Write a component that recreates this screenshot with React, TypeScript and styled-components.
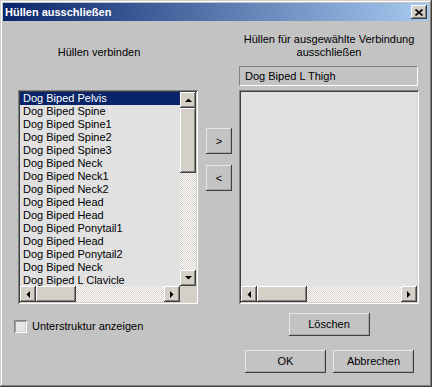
import React from 'react';
import styled, { createGlobalStyle, css } from 'styled-components';

const GlobalStyle = createGlobalStyle`
  html, body { margin: 0; padding: 0; background: #c3c3c3; }
  body { font-family: "Liberation Sans", Arial, sans-serif; font-size: 11px; color: #000; }
  * { box-sizing: border-box; }
`;

const raised = css`
  box-shadow: inset -1px -1px #404040, inset 1px 1px #ffffff, inset -2px -2px #808080, inset 2px 2px #d4d0c8;
`;

const sunken = css`
  box-shadow: inset 1px 1px #808080, inset -1px -1px #ffffff, inset 2px 2px #404040, inset -2px -2px #d4d0c8;
`;

const Window = styled.div`
  width: 432px;
  height: 387px;
  padding: 3px;
  background: #c3c3c3;
  box-shadow: inset -1px -1px #404040, inset 1px 1px #d4d0c8, inset -2px -2px #808080, inset 2px 2px #ffffff;
  display: flex;
  flex-direction: column;
`;

const TitleBar = styled.div`
  height: 18px;
  display: flex;
  align-items: center;
  justify-content: space-between;
  padding: 0 2px 0 2px;
  background: linear-gradient(to right, #0a246a, #a6caf0);
`;

const TitleText = styled.span`
  color: #fff;
  font-weight: bold;
  font-size: 11px;
  line-height: 13px;
`;

const CloseButton = styled.div`
  width: 16px;
  height: 14px;
  background: #d4d0c8;
  ${raised};
  display: flex;
  align-items: center;
  justify-content: center;
`;

const Body = styled.div`
  display: grid;
  grid-template-columns: 180px 27px 180px;
  grid-template-rows: 69px 214px auto auto;
  column-gap: 7px;
  padding-left: 15px;
`;

const LeftHeader = styled.div`
  padding-top: 25px;
  padding-right: 18px;
  text-align: center;
  line-height: 13px;
`;

const RightHeader = styled.div`
  grid-column: 3;
  padding-top: 12px;
  display: flex;
  flex-direction: column;
`;

const HeaderLabel = styled.div`
  text-align: center;
  line-height: 13px;
`;

const Field = styled.div`
  margin-top: 7px;
  height: 20px;
  width: 179px;
  border-top: 1px solid #808080;
  border-left: 1px solid #808080;
  border-bottom: 1px solid #ffffff;
  border-right: 1px solid #ffffff;
  padding-left: 5px;
  display: flex;
  align-items: center;
  line-height: 13px;
`;

const ListBox = styled.div<{ $vscroll: boolean }>`
  height: 214px;
  padding: 2px;
  background: #e1e1e1;
  ${sunken};
  display: grid;
  grid-template-columns: ${(p) => (p.$vscroll ? '1fr 16px' : '1fr')};
  grid-template-rows: 1fr 16px;
  min-width: 0;
`;

const Items = styled.div`
  overflow: hidden;
  min-width: 0;
`;

const Item = styled.div<{ $selected?: boolean }>`
  height: 13px;
  line-height: 13px;
  padding-left: 3px;
  white-space: nowrap;
  background: ${(p) => (p.$selected ? '#0a246a' : 'transparent')};
  color: ${(p) => (p.$selected ? '#ffffff' : '#000000')};
`;

const VScroll = styled.div`
  display: flex;
  flex-direction: column;
`;

const HScroll = styled.div`
  display: flex;
  flex-direction: row;
  min-width: 0;
`;

const ScrollBtn = styled.div`
  width: 16px;
  height: 16px;
  flex: none;
  background: #d4d0c8;
  ${raised};
  display: flex;
  align-items: center;
  justify-content: center;
`;

const Thumb = styled.div<{ $vertical?: boolean }>`
  flex: none;
  background: #d4d0c8;
  ${raised};
  ${(p) => (p.$vertical ? 'width: 16px;' : 'height: 16px;')}
`;

const Track = styled.div`
  flex: 1;
  background: repeating-conic-gradient(#d4d0c8 0% 25%, #ffffff 0% 50%) 0 0 / 2px 2px;
`;

const Corner = styled.div`
  background: #d4d0c8;
`;

const MiddleColumn = styled.div`
  display: flex;
  flex-direction: column;
  align-items: flex-end;
  padding-top: 38px;
  gap: 11px;
`;

const Button = styled.div<{ $w: number; $h: number }>`
  width: ${(p) => p.$w}px;
  height: ${(p) => p.$h}px;
  background: #c3c3c3;
  box-shadow: inset -1px -1px #404040, inset 1px 1px #e6e6e6, inset -2px -2px #a8a8a8;
  display: flex;
  align-items: center;
  justify-content: center;
  line-height: 13px;
`;

const CheckRow = styled.div`
  margin-top: 13px;
  margin-left: -4px;
  display: flex;
  align-items: center;
  gap: 5px;
  line-height: 13px;
  white-space: nowrap;
`;

const CheckBox = styled.div`
  width: 13px;
  height: 13px;
  background: #e6e6e6;
  box-shadow: inset 1px 1px #808080, inset -1px -1px #ffffff, inset 2px 2px #a0a0a0, inset -2px -2px #d4d0c8;
`;

const DeleteCell = styled.div`
  grid-column: 3;
  margin-top: 9px;
  display: flex;
  justify-content: center;
`;

const Footer = styled.div`
  grid-column: 1 / -1;
  margin-top: 14px;
  padding-right: 5px;
  display: flex;
  justify-content: flex-end;
  gap: 7px;
`;

type Dir = 'up' | 'down' | 'left' | 'right';

const Arrow: React.FC<{ dir: Dir }> = ({ dir }) => {
  const pts: Record<Dir, string> = {
    up: '0,4 7,4 3.5,0.5',
    down: '0,0 7,0 3.5,3.5',
    left: '4,0 4,7 0.5,3.5',
    right: '0,0 0,7 3.5,3.5',
  };
  const vertical = dir === 'up' || dir === 'down';
  return (
    <svg width={vertical ? 7 : 4} height={vertical ? 4 : 7} viewBox={vertical ? '0 0 7 4' : '0 0 4 7'}>
      <polygon points={pts[dir]} fill="#000" />
    </svg>
  );
};

const items = [
  'Dog Biped Pelvis',
  'Dog Biped Spine',
  'Dog Biped Spine1',
  'Dog Biped Spine2',
  'Dog Biped Spine3',
  'Dog Biped Neck',
  'Dog Biped Neck1',
  'Dog Biped Neck2',
  'Dog Biped Head',
  'Dog Biped Head',
  'Dog Biped Ponytail1',
  'Dog Biped Head',
  'Dog Biped Ponytail2',
  'Dog Biped Neck',
  'Dog Biped L Clavicle',
];

const HorizontalBar: React.FC<{ thumb: number }> = ({ thumb }) => (
  <HScroll>
    <ScrollBtn><Arrow dir="left" /></ScrollBtn>
    <Thumb style={{ width: thumb }} />
    <Track />
    <ScrollBtn><Arrow dir="right" /></ScrollBtn>
  </HScroll>
);

export default function App() {
  return (
    <>
      <GlobalStyle />
      <Window>
        <TitleBar>
          <TitleText>Hüllen ausschließen</TitleText>
          <CloseButton>
            <svg width="8" height="7" viewBox="0 0 8 7">
              <path d="M0.5 0.5 L7.5 6.5 M7.5 0.5 L0.5 6.5" stroke="#000" strokeWidth="1.6" />
            </svg>
          </CloseButton>
        </TitleBar>
        <Body>
          <LeftHeader>Hüllen verbinden</LeftHeader>
          <RightHeader>
            <HeaderLabel>
              Hüllen für ausgewählte Verbindung
              <br />
              ausschließen
            </HeaderLabel>
            <Field>Dog Biped L Thigh</Field>
          </RightHeader>

          <ListBox $vscroll>
            <Items>
              {items.map((it, i) => (
                <Item key={i} $selected={i === 0}>{it}</Item>
              ))}
            </Items>
            <VScroll>
              <ScrollBtn><Arrow dir="up" /></ScrollBtn>
              <Thumb $vertical style={{ height: 65 }} />
              <Track />
              <ScrollBtn><Arrow dir="down" /></ScrollBtn>
            </VScroll>
            <HorizontalBar thumb={40} />
            <Corner />
          </ListBox>
          <MiddleColumn>
            <Button $w={26} $h={26}>&gt;</Button>
            <Button $w={26} $h={26}>&lt;</Button>
          </MiddleColumn>
          <ListBox $vscroll={false}>
            <Items />
            <HorizontalBar thumb={50} />
          </ListBox>

          <CheckRow>
            <CheckBox />
            <span>Unterstruktur anzeigen</span>
          </CheckRow>
          <DeleteCell>
            <Button $w={81} $h={23}>Löschen</Button>
          </DeleteCell>

          <Footer>
            <Button $w={81} $h={23}>OK</Button>
            <Button $w={81} $h={23}>Abbrechen</Button>
          </Footer>
        </Body>
      </Window>
    </>
  );
}
